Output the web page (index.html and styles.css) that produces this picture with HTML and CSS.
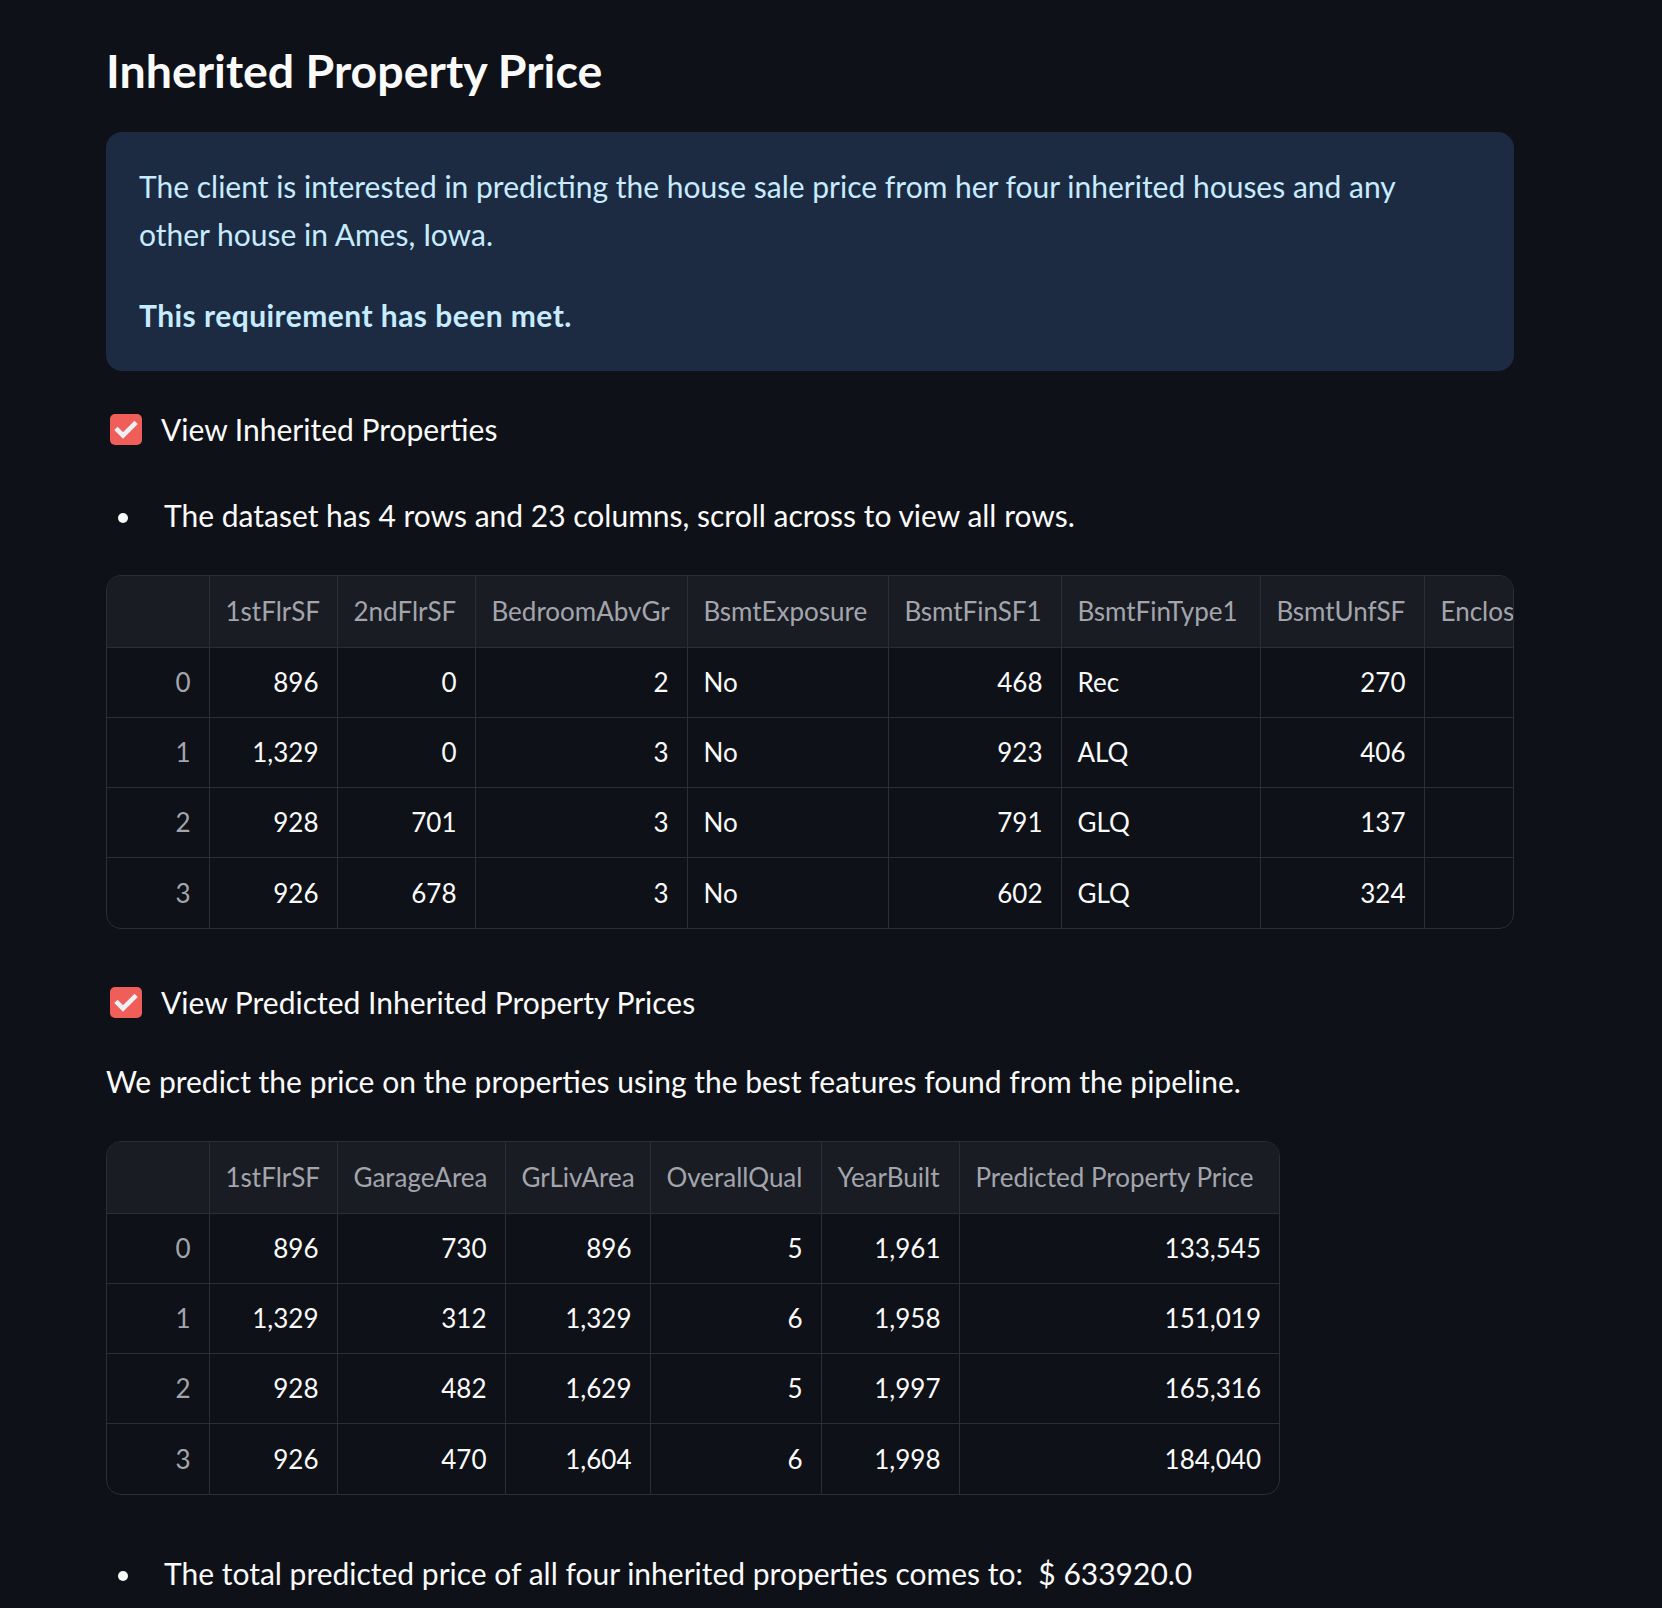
FILE: index.html
```html
<!DOCTYPE html>
<html lang="en">
<head>
<meta charset="utf-8">
<title>Inherited Property Price</title>
<link rel="stylesheet" href="styles.css">
</head>
<body>
<main class="page">
  <h1 class="title">Inherited Property Price</h1>

  <div class="info">
    <p>The client is interested in predicting the house sale price from her four inherited houses and any other house in Ames, Iowa.</p>
    <p class="strong">This requirement has been met.</p>
  </div>

  <label class="check">
    <span class="box"><svg width="32" height="31" viewBox="0 0 32 31"><path d="M7.5 16 L13 21.5 L24.5 10" fill="none" stroke="#eef0f4" stroke-width="4.6" stroke-linecap="square"/></svg></span>
    <span>View Inherited Properties</span>
  </label>

  <ul class="bullets">
    <li>The dataset has 4 rows and 23 columns, scroll across to view all rows.</li>
  </ul>

  <div class="grid grid-wide">
    <table class="t1">
      <colgroup>
        <col class="c102"><col class="c128"><col class="c138"><col class="c212"><col class="c201"><col class="c173"><col class="c199"><col class="c164"><col class="c200">
      </colgroup>
      <thead>
        <tr><th></th><th>1stFlrSF</th><th>2ndFlrSF</th><th>BedroomAbvGr</th><th>BsmtExposure</th><th>BsmtFinSF1</th><th>BsmtFinType1</th><th>BsmtUnfSF</th><th>EnclosedPorch</th></tr>
      </thead>
      <tbody>
        <tr><td class="idx">0</td><td>896</td><td>0</td><td>2</td><td class="txt">No</td><td>468</td><td class="txt">Rec</td><td>270</td><td></td></tr>
        <tr><td class="idx">1</td><td>1,329</td><td>0</td><td>3</td><td class="txt">No</td><td>923</td><td class="txt">ALQ</td><td>406</td><td></td></tr>
        <tr><td class="idx">2</td><td>928</td><td>701</td><td>3</td><td class="txt">No</td><td>791</td><td class="txt">GLQ</td><td>137</td><td></td></tr>
        <tr><td class="idx">3</td><td>926</td><td>678</td><td>3</td><td class="txt">No</td><td>602</td><td class="txt">GLQ</td><td>324</td><td></td></tr>
      </tbody>
    </table>
  </div>

  <label class="check check-after-table">
    <span class="box"><svg width="32" height="31" viewBox="0 0 32 31"><path d="M7.5 16 L13 21.5 L24.5 10" fill="none" stroke="#eef0f4" stroke-width="4.6" stroke-linecap="square"/></svg></span>
    <span>View Predicted Inherited Property Prices</span>
  </label>

  <p class="lead">We predict the price on the properties using the best features found from the pipeline.</p>

  <div class="grid grid-fit">
    <table class="t2">
      <colgroup>
        <col class="c102"><col class="c128"><col class="c168"><col class="c145"><col class="c171"><col class="c138"><col class="c320">
      </colgroup>
      <thead>
        <tr><th></th><th>1stFlrSF</th><th>GarageArea</th><th>GrLivArea</th><th>OverallQual</th><th>YearBuilt</th><th>Predicted Property Price</th></tr>
      </thead>
      <tbody>
        <tr><td class="idx">0</td><td>896</td><td>730</td><td>896</td><td>5</td><td>1,961</td><td>133,545</td></tr>
        <tr><td class="idx">1</td><td>1,329</td><td>312</td><td>1,329</td><td>6</td><td>1,958</td><td>151,019</td></tr>
        <tr><td class="idx">2</td><td>928</td><td>482</td><td>1,629</td><td>5</td><td>1,997</td><td>165,316</td></tr>
        <tr><td class="idx">3</td><td>926</td><td>470</td><td>1,604</td><td>6</td><td>1,998</td><td>184,040</td></tr>
      </tbody>
    </table>
  </div>

  <ul class="bullets bullets-total">
    <li>The total predicted price of all four inherited properties comes to:&nbsp; $ 633920.0</li>
  </ul>
</main>
</body>
</html>
```
FILE: styles.css
```css
* { box-sizing: border-box; }

html, body {
  margin: 0;
  background: #0e1117;
}

body {
  color: #fafafa;
  font-family: Lato, "Liberation Sans", sans-serif;
  font-size: 30px;
  line-height: 48px;
}

.page {
  width: 1514px;
  padding: 42px 0 40px 106px;
}

.title {
  margin: 0;
  font-size: 46.5px;
  line-height: 56px;
  font-weight: 700;
}

.info {
  margin-top: 34px;
  background: #1c2b42;
  border-radius: 16px;
  padding: 30px 100px 32px 33px;
  color: #c7ebff;
}

.info p { margin: 0; }

.info .strong {
  margin-top: 33px;
  font-weight: 700;
  letter-spacing: 0.45px;
}

.check {
  display: flex;
  align-items: center;
  gap: 19px;
  margin-top: 34px;
  padding-left: 4px;
}

.check-after-table { margin-top: 49px; }

.box {
  width: 32px;
  height: 31px;
  border-radius: 5px;
  background: #f05e59;
  display: flex;
  flex: none;
}

.bullets {
  list-style: none;
  margin: 38px 0 0;
  padding: 0;
}

.bullets li { display: flex; }

.bullets li::before {
  content: "";
  flex: none;
  width: 10px;
  height: 10px;
  border-radius: 50%;
  background: #fafafa;
  margin: 22px 36px 0 12px;
}

.bullets-total { margin-top: 54px; }

.lead { margin: 31px 0 0; }

.grid {
  margin-top: 36px;
  border: 1px solid #2c2e36;
  border-radius: 15px;
  overflow: hidden;
}

.grid-wide { width: 1408px; }
.grid-fit { width: max-content; }

.grid table {
  border-collapse: collapse;
  table-layout: fixed;
  font-size: 26px;
  line-height: 32px;
}

.t1 { width: 1517px; }
.t2 { width: 1172px; }

.c102 { width: 102px; }
.c128 { width: 128px; }
.c138 { width: 138px; }
.c145 { width: 145px; }
.c164 { width: 164px; }
.c168 { width: 168px; }
.c171 { width: 171px; }
.c173 { width: 173px; }
.c199 { width: 199px; }
.c200 { width: 200px; }
.c201 { width: 201px; }
.c212 { width: 212px; }
.c320 { width: 320px; }

.grid th,
.grid td {
  padding: 0 18px 0 16px;
  border-right: 1px solid #2c2e36;
  border-bottom: 1px solid #2c2e36;
  white-space: nowrap;
  overflow: hidden;
}

.grid tbody tr:last-child td { border-bottom: none; }
.grid th:last-child,
.grid td:last-child { border-right: none; }
.t1 th:last-child, .t1 td:last-child { border-right: 1px solid #2c2e36; }

.grid thead tr { height: 71px; }
.grid tbody tr { height: 70px; }
.grid tbody tr:last-child { height: 71px; }

.grid th {
  background: #1a1c24;
  color: #a3a5ac;
  font-weight: 400;
  text-align: left;
}

.grid td { text-align: right; }
.grid td.idx { color: #a3a5ac; }
.grid td.txt { text-align: left; }
```
